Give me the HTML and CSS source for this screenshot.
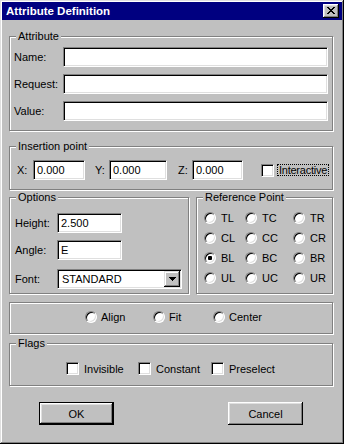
FILE: index.html
```html
<!DOCTYPE html>
<html lang="en">
<head>
    <meta charset="UTF-8">
    <meta name="viewport" content="width=device-width, initial-scale=1.0">
    <title>Attribute Definition</title>
    <link rel="stylesheet" href="styles.css">
</head>
<body>
    <div class="window">
        <div class="titlebar">
            <span class="title">Attribute Definition</span>
            <span class="close">
                <svg width="8" height="7" viewBox="0 0 8 7" shape-rendering="crispEdges">
                    <path d="M0 0h2v1H0z M6 0h2v1H6z M1 1h2v1H1z M5 1h2v1H5z M2 2h4v1H2z M3 3h2v1H3z M2 4h4v1H2z M1 5h2v1H1z M5 5h2v1H5z M0 6h2v1H0z M6 6h2v1H6z" fill="#000"/>
                </svg>
            </span>
        </div>

        <div class="content">
            <div class="group attribute">
                <div class="legend">Attribute</div>
                <div class="row"><label class="lbl">Name:</label><input class="field wide" type="text"></div>
                <div class="row"><label class="lbl">Request:</label><input class="field wide" type="text"></div>
                <div class="row"><label class="lbl">Value:</label><input class="field wide" type="text"></div>
            </div>

            <div class="group insertion">
                <div class="legend">Insertion point</div>
                <div class="coords">
                    <label class="coord-lbl">X:</label><input class="field cx" type="text" value="0.000">
                    <label class="coord-lbl cy-lbl">Y:</label><input class="field cy" type="text" value="0.000">
                    <label class="coord-lbl cz-lbl">Z:</label><input class="field cz" type="text" value="0.000">
                    <input class="check interactive" type="checkbox">
                    <span class="focus">Interactive</span>
                </div>
            </div>

            <div class="split">
                <div class="group options">
                    <div class="legend">Options</div>
                    <div class="opt-row"><label class="opt-lbl">Height:</label><input class="field short" type="text" value="2.500"></div>
                    <div class="opt-row angle"><label class="opt-lbl">Angle:</label><input class="field short" type="text" value="E"></div>
                    <div class="opt-row font"><label class="opt-lbl">Font:</label>
                        <div class="select">
                            <span class="select-text">STANDARD</span>
                            <span class="drop">
                                <svg width="7" height="4" viewBox="0 0 7 4" shape-rendering="crispEdges">
                                    <path d="M0 0h7v1H0z M1 1h5v1H1z M2 2h3v1H2z M3 3h1v1H3z" fill="#000"/>
                                </svg>
                            </span>
                        </div>
                    </div>
                </div>

                <div class="group refpoint">
                    <div class="legend">Reference Point</div>
                    <div class="radio-grid">
                        <label class="opt"><input type="radio" name="ref">TL</label>
                        <label class="opt"><input type="radio" name="ref">TC</label>
                        <label class="opt"><input type="radio" name="ref">TR</label>
                        <label class="opt"><input type="radio" name="ref">CL</label>
                        <label class="opt"><input type="radio" name="ref">CC</label>
                        <label class="opt"><input type="radio" name="ref">CR</label>
                        <label class="opt"><input type="radio" name="ref" checked>BL</label>
                        <label class="opt"><input type="radio" name="ref">BC</label>
                        <label class="opt"><input type="radio" name="ref">BR</label>
                        <label class="opt"><input type="radio" name="ref">UL</label>
                        <label class="opt"><input type="radio" name="ref">UC</label>
                        <label class="opt"><input type="radio" name="ref">UR</label>
                    </div>
                </div>
            </div>

            <div class="group justify">
                <label class="opt"><input type="radio" name="just">Align</label>
                <label class="opt"><input type="radio" name="just">Fit</label>
                <label class="opt"><input type="radio" name="just">Center</label>
            </div>

            <div class="group flags">
                <div class="legend">Flags</div>
                <div class="flag-row">
                    <label class="opt"><input class="check" type="checkbox">Invisible</label>
                    <label class="opt"><input class="check" type="checkbox">Constant</label>
                    <label class="opt"><input class="check" type="checkbox">Preselect</label>
                </div>
            </div>

            <div class="buttons">
                <button class="btn default">OK</button>
                <button class="btn cancel">Cancel</button>
            </div>
        </div>
    </div>
</body>
</html>
```

FILE: styles.css
```css
body {
    margin: 0;
    font-family: 'Liberation Sans', Arial, sans-serif;
    font-size: 11px;
    color: #000;
    background: #c0c0c0;
}

.window {
    width: 344px;
    height: 444px;
    box-sizing: border-box;
    padding: 2px;
    background: #c0c0c0;
    /* raised window frame */
    box-shadow: inset -1px -1px #000, inset 1px 1px #dfdfdf, inset -2px -2px #808080, inset 2px 2px #fff;
}

.titlebar {
    height: 18px;
    background: #000080;
    display: flex;
    align-items: center;
    justify-content: space-between;
    padding: 0 3px 0 4px;
}

.title {
    color: #fff;
    font-weight: bold;
    font-size: 11.5px;
}

.close {
    display: block;
    width: 16px;
    height: 14px;
    box-sizing: border-box;
    padding: 3px 0 0 4px;
    background: #c0c0c0;
    box-shadow: inset -1px -1px #000, inset 1px 1px #fff, inset -2px -2px #808080, inset 2px 2px #dfdfdf;
}

.close svg {
    display: block;
}

.content {
    padding: 0 9px 0 7px;
}

/* etched group box */
.group {
    border: 1px solid #808080;
    box-shadow: inset 1px 1px #fff, 1px 1px #fff;
    padding: 0 4px;
}

.legend {
    display: table;
    margin: -7px 0 0 2px;
    padding: 0 2px;
    line-height: 13px;
    background: #c0c0c0;
}

.field {
    box-sizing: border-box;
    height: 20px;
    margin: 0;
    padding: 0 3px;
    border: 1px solid;
    border-color: #808080 #fff #fff #808080;
    box-shadow: inset 1px 1px #000, inset -1px -1px #dfdfdf;
    background: #fff;
    font: inherit;
    color: #000;
    outline: none;
}

.check {
    appearance: none;
    -webkit-appearance: none;
    width: 13px;
    height: 13px;
    margin: 0;
    border: 1px solid;
    border-color: #808080 #fff #fff #808080;
    box-shadow: inset 1px 1px #000, inset -1px -1px #dfdfdf;
    background: #fff;
    flex-shrink: 0;
}

input[type="radio"] {
    appearance: none;
    -webkit-appearance: none;
    width: 12px;
    height: 12px;
    margin: 0;
    border-radius: 50%;
    border: 1px solid;
    border-color: #808080 #fff #fff #808080;
    box-shadow: inset 1px 1px #000, inset -1px -1px #dfdfdf;
    background: #fff;
    flex-shrink: 0;
}

input[type="radio"]:checked {
    background: radial-gradient(circle, #000 0 2px, #fff 2.5px);
}

.opt {
    display: flex;
    align-items: center;
    gap: 5px;
}

/* Attribute */
.attribute {
    margin-top: 16px;
    padding-bottom: 9px;
}

.attribute .legend {
    margin-bottom: 4px;
}

.row {
    display: flex;
    align-items: center;
}

.row + .row {
    margin-top: 7px;
}

.lbl {
    width: 49px;
}

.wide {
    width: 265px;
}

/* Insertion point */
.insertion {
    margin-top: 15px;
    padding-bottom: 9px;
}

.coords {
    display: flex;
    align-items: center;
    margin: 7px 0 0 3px;
}

.coords > * {
    flex-shrink: 0;
}

.coord-lbl {
    width: 16px;
}

.cy-lbl {
    width: 14px;
    margin-left: 10px;
}

.cz-lbl {
    width: 14px;
    margin-left: 11px;
}

.cx { width: 52px; }
.cy { width: 58px; }
.cz { width: 51px; }

.interactive {
    margin-left: 18px;
}

.focus {
    margin-left: 3px;
    padding: 0 1px;
    line-height: 10px;
    letter-spacing: -0.25px;
    border: 1px dotted #000;
    white-space: nowrap;
}

/* Options + Reference Point */
.split {
    display: flex;
    gap: 7px;
    margin-top: 7px;
}

.options {
    width: 180px;
    box-sizing: border-box;
    padding-bottom: 4px;
}

.refpoint {
    width: 137px;
    box-sizing: border-box;
}

.opt-row {
    display: flex;
    align-items: center;
    margin-top: 9px;
}

.opt-row.angle {
    margin-top: 7px;
}

.opt-row.font {
    margin-top: 9px;
}

.opt-lbl {
    width: 42px;
    padding-left: 1px;
}

.short {
    width: 65px;
}

.select {
    box-sizing: border-box;
    width: 125px;
    height: 20px;
    display: flex;
    align-items: center;
    justify-content: space-between;
    padding: 2px 2px 2px 4px;
    border: 1px solid;
    border-color: #808080 #fff #fff #808080;
    box-shadow: inset 1px 1px #000, inset -1px -1px #dfdfdf;
    background: #fff;
}

.drop {
    box-sizing: border-box;
    width: 16px;
    height: 16px;
    margin-right: -1px;
    display: flex;
    align-items: center;
    justify-content: center;
    background: #c0c0c0;
    box-shadow: inset -1px -1px #000, inset 1px 1px #dfdfdf, inset -2px -2px #808080, inset 2px 2px #fff;
}

.drop svg {
    display: block;
}

.radio-grid {
    display: grid;
    grid-template-columns: 41px 48px auto;
    grid-auto-rows: 20px;
    margin: 4px 0 0 3px;
}

/* Align / Fit / Center */
.justify {
    display: grid;
    grid-template-columns: 68px 60px auto;
    grid-auto-rows: 14px;
    margin-top: 8px;
    padding: 7px 0 9px 75px;
}

.justify .opt {
    gap: 4px;
}

/* Flags */
.flags {
    margin-top: 9px;
    padding-bottom: 9px;
}

.flag-row {
    display: grid;
    grid-template-columns: 72px 73px auto;
    grid-auto-rows: 15px;
    margin: 11px 0 0 52px;
}

/* Buttons */
.buttons {
    display: flex;
    margin-top: 16px;
}

.btn {
    box-sizing: border-box;
    width: 75px;
    height: 23px;
    padding: 0;
    border: none;
    background: #c0c0c0;
    font: inherit;
    color: #000;
    box-shadow: inset -1px -1px #000, inset 1px 1px #fff, inset -2px -2px #808080, inset 2px 2px #dfdfdf;
}

.btn.default {
    margin-left: 30px;
    border: 1px solid #000;
}

.btn.cancel {
    margin-left: 114px;
}
```
